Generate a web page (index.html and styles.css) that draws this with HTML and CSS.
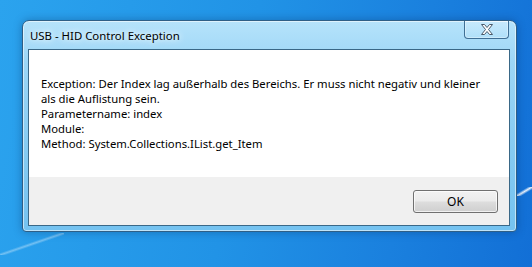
FILE: index.html
```html
<!DOCTYPE html>
<html lang="de">
<head>
  <meta charset="UTF-8">
  <title>USB - HID Control Exception</title>
  <link rel="stylesheet" href="styles.css">
</head>
<body>
  <div class="desktop">
    <div class="window">
      <div class="title-bar">
        <div class="title-text">USB - HID Control Exception</div>
        <div class="close-btn">
          <svg width="14" height="11" viewBox="0 0 14 11">
            <path d="M1.5 0.5h3l2.5 3 2.5-3h3l-4 5 4 5h-3l-2.5-3-2.5 3h-3l4-5z" fill="#fff" stroke="#4a5a6a" stroke-width="1" stroke-linejoin="round"/>
          </svg>
        </div>
      </div>

      <div class="client">
        <div class="message">
          Exception: Der Index lag außerhalb des Bereichs. Er muss nicht negativ und kleiner<br>
          als die Auflistung sein.<br>
          Parametername: index<br>
          Module:<br>
          Method: System.Collections.IList.get_Item
        </div>
        <div class="button-row">
          <button class="ok-btn">OK</button>
        </div>
      </div>
    </div>
  </div>
</body>
</html>
```

FILE: styles.css
```css
body {
  margin: 0;
  width: 532px;
  height: 267px;
  overflow: hidden;
  font-family: 'Noto Sans', 'Open Sans', sans-serif;
}

/* wallpaper: blue gradient plus two faint light beams */
.desktop {
  width: 532px;
  height: 267px;
  box-sizing: border-box;
  padding: 20px 15px 0 22px;
  background:
    linear-gradient(to bottom right, transparent 45%, rgba(255,255,255,0.35) 50%, transparent 55%) 0 233px / 64px 22px no-repeat,
    linear-gradient(to bottom right, transparent 35%, rgba(255,255,255,0.9) 50%, transparent 65%) 517px 187px / 15px 9px no-repeat,
    linear-gradient(100deg, #2ba3ee 0%, #2193e6 45%, #1a80de 75%, #126fd6 100%);
}

.window {
  width: 495px;
  height: 212px;
  box-sizing: border-box;
  border: 1px solid #2f5f86;
  border-radius: 7px 7px 4px 4px;
  background: linear-gradient(180deg, #b6e3fb 0%, #9cd6f6 20%, #86cbf2 60%, #74c2f0 100%);
  box-shadow: inset 0 0 0 1px rgba(255,255,255,0.55), 0 0 8px rgba(0,40,90,0.35);
  padding: 0 6px 5px 5px;
  display: flex;
  flex-direction: column;
}

.title-bar {
  height: 28px;
  display: flex;
  justify-content: space-between;
  align-items: flex-start;
}

.title-text {
  font-size: 11.4px;
  color: #000;
  margin: 7px 0 0 2px;
  line-height: 16px;
  text-shadow: 0 0 8px #fff, 0 0 5px #e8f7ff;
}

.close-btn {
  width: 45px;
  height: 18px;
  margin-right: 1px;
  box-sizing: border-box;
  border: 1px solid #3f6f95;
  border-top: none;
  border-radius: 0 0 4px 4px;
  background: linear-gradient(180deg, rgba(255,255,255,0.25), rgba(255,255,255,0.05));
  box-shadow: inset 0 0 0 1px rgba(255,255,255,0.35);
  display: flex;
  align-items: center;
  justify-content: center;
}

.client {
  flex-grow: 1;
  border: 1px solid #3a6887;
  background: #f0f0f0;
  display: flex;
  flex-direction: column;
}

.message {
  height: 127px;
  box-sizing: border-box;
  background: #fff;
  padding: 26px 0 0 12px;
  font-size: 11.3px;
  line-height: 15px;
  color: #000;
}

.button-row {
  display: flex;
  justify-content: flex-end;
  padding: 13px 11px 0 0;
}

.ok-btn {
  width: 85px;
  height: 23px;
  border: 1px solid #707070;
  border-radius: 3px;
  background: linear-gradient(180deg, #f2f2f2 0%, #ebebeb 48%, #dddddd 52%, #cfcfcf 100%);
  box-shadow: inset 0 0 0 1px rgba(255,255,255,0.7);
  font-family: 'Noto Sans', 'Open Sans', sans-serif;
  font-size: 12px;
  color: #000;
  padding: 0;
}
```
